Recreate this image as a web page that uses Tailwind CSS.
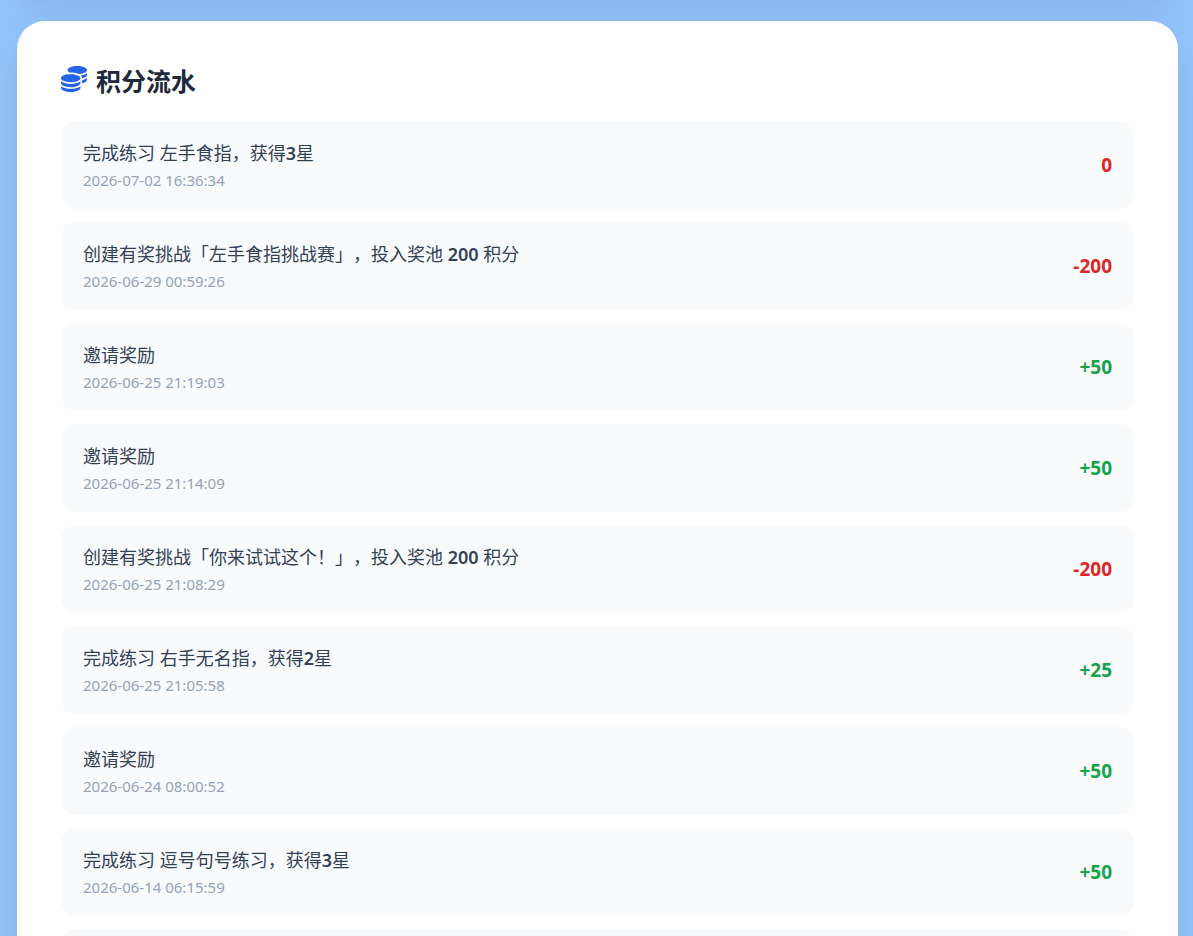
<!DOCTYPE html>
<html lang="zh-CN">
<head>
    <meta charset="UTF-8">
    <meta name="viewport" content="width=device-width, initial-scale=1.0">
    <title>积分流水</title>
    <script src="https://cdn.jsdelivr.net/npm/@tailwindcss/browser@4"></script>
</head>
<body class="bg-[#93c5fd] min-h-screen overflow-x-hidden font-['Noto_Sans','Noto_Sans_CJK_SC',sans-serif] [text-spacing-trim:space-all]">
    <div class="pl-[17px] pr-[15px] pb-8">
        <!-- Bottom edge of the previous card -->
        <div class="h-40 -mt-[164px] mb-[25px] rounded-[28px] shadow-[0_20px_40px_rgba(0,0,0,0.08)]"></div>

        <!-- Points history -->
        <section class="relative bg-white border border-white/60 rounded-[28px] px-[43px] pt-[39px] pb-11 shadow-[0_20px_40px_rgba(0,0,0,0.1)]">
            <h2 class="flex items-center gap-[9px] mb-5 text-[25px] leading-10 font-bold text-[#1e293b]">
                <svg class="w-[26px] h-[26px] -mt-1 text-[#2563eb]" viewBox="0 0 512 512" fill="currentColor" aria-hidden="true">
                    <path d="M512 80c0 18-14.3 34.6-38.4 48c-29.1 16.1-72.5 27.5-122.3 30.9c-3.7-1.8-7.4-3.5-11.3-5C300.6 137.4 248.2 128 192 128c-8.3 0-16.4 .2-24.5 .6l-1.1-.6C142.3 114.6 128 98 128 80c0-44.2 86-80 192-80S512 35.8 512 80zM160.7 161.1c10.2-.7 20.7-1.1 31.3-1.1c62.2 0 117.4 12.3 152.5 31.4C369.3 204.9 384 221.7 384 240c0 4-.7 7.9-2.1 11.7c-4.6 13.2-17 25.3-35 35.5c-.1 .1-.3 .1-.4 .2c-.3 .2-.6 .3-.9 .5c-35 19.4-90.8 32-153.6 32c-59.6 0-112.9-11.3-148.2-29.1c-1.9-.9-3.7-1.9-5.5-2.9C14.3 274.6 0 258 0 240c0-34.8 53.4-64.5 128-75.4c10.5-1.5 21.4-2.7 32.7-3.5zM416 240c0-21.9-10.6-39.9-24.1-53.4c28.3-4.4 54.2-11.4 76.2-20.5c16.3-6.8 31.5-15.2 43.9-25.5V176c0 19.3-16.5 37.1-43.8 50.9c-14.6 7.4-32.4 13.7-52.4 18.5c.1-1.8 .2-3.5 .2-5.3zm-32 96c0 18-14.3 34.6-38.4 48c-1.8 1-3.6 1.9-5.5 2.9C304.9 404.7 251.6 416 192 416c-62.8 0-118.6-12.6-153.6-32C14.3 370.6 0 354 0 336V300.6c12.5 10.3 27.6 18.7 43.9 25.5C83.4 342.6 135.8 352 192 352s108.6-9.4 148.1-25.9c7.8-3.2 15.3-6.9 22.4-10.9c6.1-3.4 11.8-7.2 17.2-11.2c1.5-1.1 2.9-2.3 4.3-3.4V336zm32 0V278.1c19-4.2 36.5-9.5 52.1-16c16.3-6.8 31.5-15.2 43.9-25.5V272c0 10.5-5 21-14.9 30.9c-16.3 16.3-45 29.7-81.3 38.4c.1-1.7 .2-3.5 .2-5.3zM192 448c56.2 0 108.6-9.4 148.1-25.9c16.3-6.8 31.5-15.2 43.9-25.5V432c0 44.2-86 80-192 80S0 476.2 0 432V396.6c12.5 10.3 27.6 18.7 43.9 25.5C83.4 438.6 135.8 448 192 448z"/>
                </svg>
                积分流水
            </h2>

            <ul class="flex flex-col gap-[13px]">
                <li class="flex items-center justify-between bg-[#f8fafc] rounded-[14px] px-[22px] pt-[18px] pb-[17px]">
                    <div>
                        <p class="text-[18px] leading-7 text-[#334155]">完成练习 左手食指，获得<span class="font-semibold">3</span>星</p>
                        <p class="mt-px text-[15px] leading-6 text-[#94a3b8]">2026-07-02 16:36:34</p>
                    </div>
                    <span class="text-[19px] font-bold text-[#dc2626]">0</span>
                </li>
                <li class="flex items-center justify-between bg-[#f8fafc] rounded-[14px] px-[22px] pt-[18px] pb-[17px]">
                    <div>
                        <p class="text-[18px] leading-7 text-[#334155]">创建有奖挑战「左手食指挑战赛」，投入奖池 <span class="font-semibold">200</span> 积分</p>
                        <p class="mt-px text-[15px] leading-6 text-[#94a3b8]">2026-06-29 00:59:26</p>
                    </div>
                    <span class="text-[19px] font-bold text-[#dc2626]">-200</span>
                </li>
                <li class="flex items-center justify-between bg-[#f8fafc] rounded-[14px] px-[22px] pt-[18px] pb-[17px]">
                    <div>
                        <p class="text-[18px] leading-7 text-[#334155]">邀请奖励</p>
                        <p class="mt-px text-[15px] leading-6 text-[#94a3b8]">2026-06-25 21:19:03</p>
                    </div>
                    <span class="text-[19px] font-bold text-[#16a34a]">+50</span>
                </li>
                <li class="flex items-center justify-between bg-[#f8fafc] rounded-[14px] px-[22px] pt-[18px] pb-[17px]">
                    <div>
                        <p class="text-[18px] leading-7 text-[#334155]">邀请奖励</p>
                        <p class="mt-px text-[15px] leading-6 text-[#94a3b8]">2026-06-25 21:14:09</p>
                    </div>
                    <span class="text-[19px] font-bold text-[#16a34a]">+50</span>
                </li>
                <li class="flex items-center justify-between bg-[#f8fafc] rounded-[14px] px-[22px] pt-[18px] pb-[17px]">
                    <div>
                        <p class="text-[18px] leading-7 text-[#334155]">创建有奖挑战「你来试试这个！」，投入奖池 <span class="font-semibold">200</span> 积分</p>
                        <p class="mt-px text-[15px] leading-6 text-[#94a3b8]">2026-06-25 21:08:29</p>
                    </div>
                    <span class="text-[19px] font-bold text-[#dc2626]">-200</span>
                </li>
                <li class="flex items-center justify-between bg-[#f8fafc] rounded-[14px] px-[22px] pt-[18px] pb-[17px]">
                    <div>
                        <p class="text-[18px] leading-7 text-[#334155]">完成练习 右手无名指，获得<span class="font-semibold">2</span>星</p>
                        <p class="mt-px text-[15px] leading-6 text-[#94a3b8]">2026-06-25 21:05:58</p>
                    </div>
                    <span class="text-[19px] font-bold text-[#16a34a]">+25</span>
                </li>
                <li class="flex items-center justify-between bg-[#f8fafc] rounded-[14px] px-[22px] pt-[18px] pb-[17px]">
                    <div>
                        <p class="text-[18px] leading-7 text-[#334155]">邀请奖励</p>
                        <p class="mt-px text-[15px] leading-6 text-[#94a3b8]">2026-06-24 08:00:52</p>
                    </div>
                    <span class="text-[19px] font-bold text-[#16a34a]">+50</span>
                </li>
                <li class="flex items-center justify-between bg-[#f8fafc] rounded-[14px] px-[22px] pt-[18px] pb-[17px]">
                    <div>
                        <p class="text-[18px] leading-7 text-[#334155]">完成练习 逗号句号练习，获得<span class="font-semibold">3</span>星</p>
                        <p class="mt-px text-[15px] leading-6 text-[#94a3b8]">2026-06-14 06:15:59</p>
                    </div>
                    <span class="text-[19px] font-bold text-[#16a34a]">+50</span>
                </li>
                <li class="h-[88px] bg-[#f8fafc] rounded-[14px]"></li>
            </ul>
        </section>
    </div>
</body>
</html>
